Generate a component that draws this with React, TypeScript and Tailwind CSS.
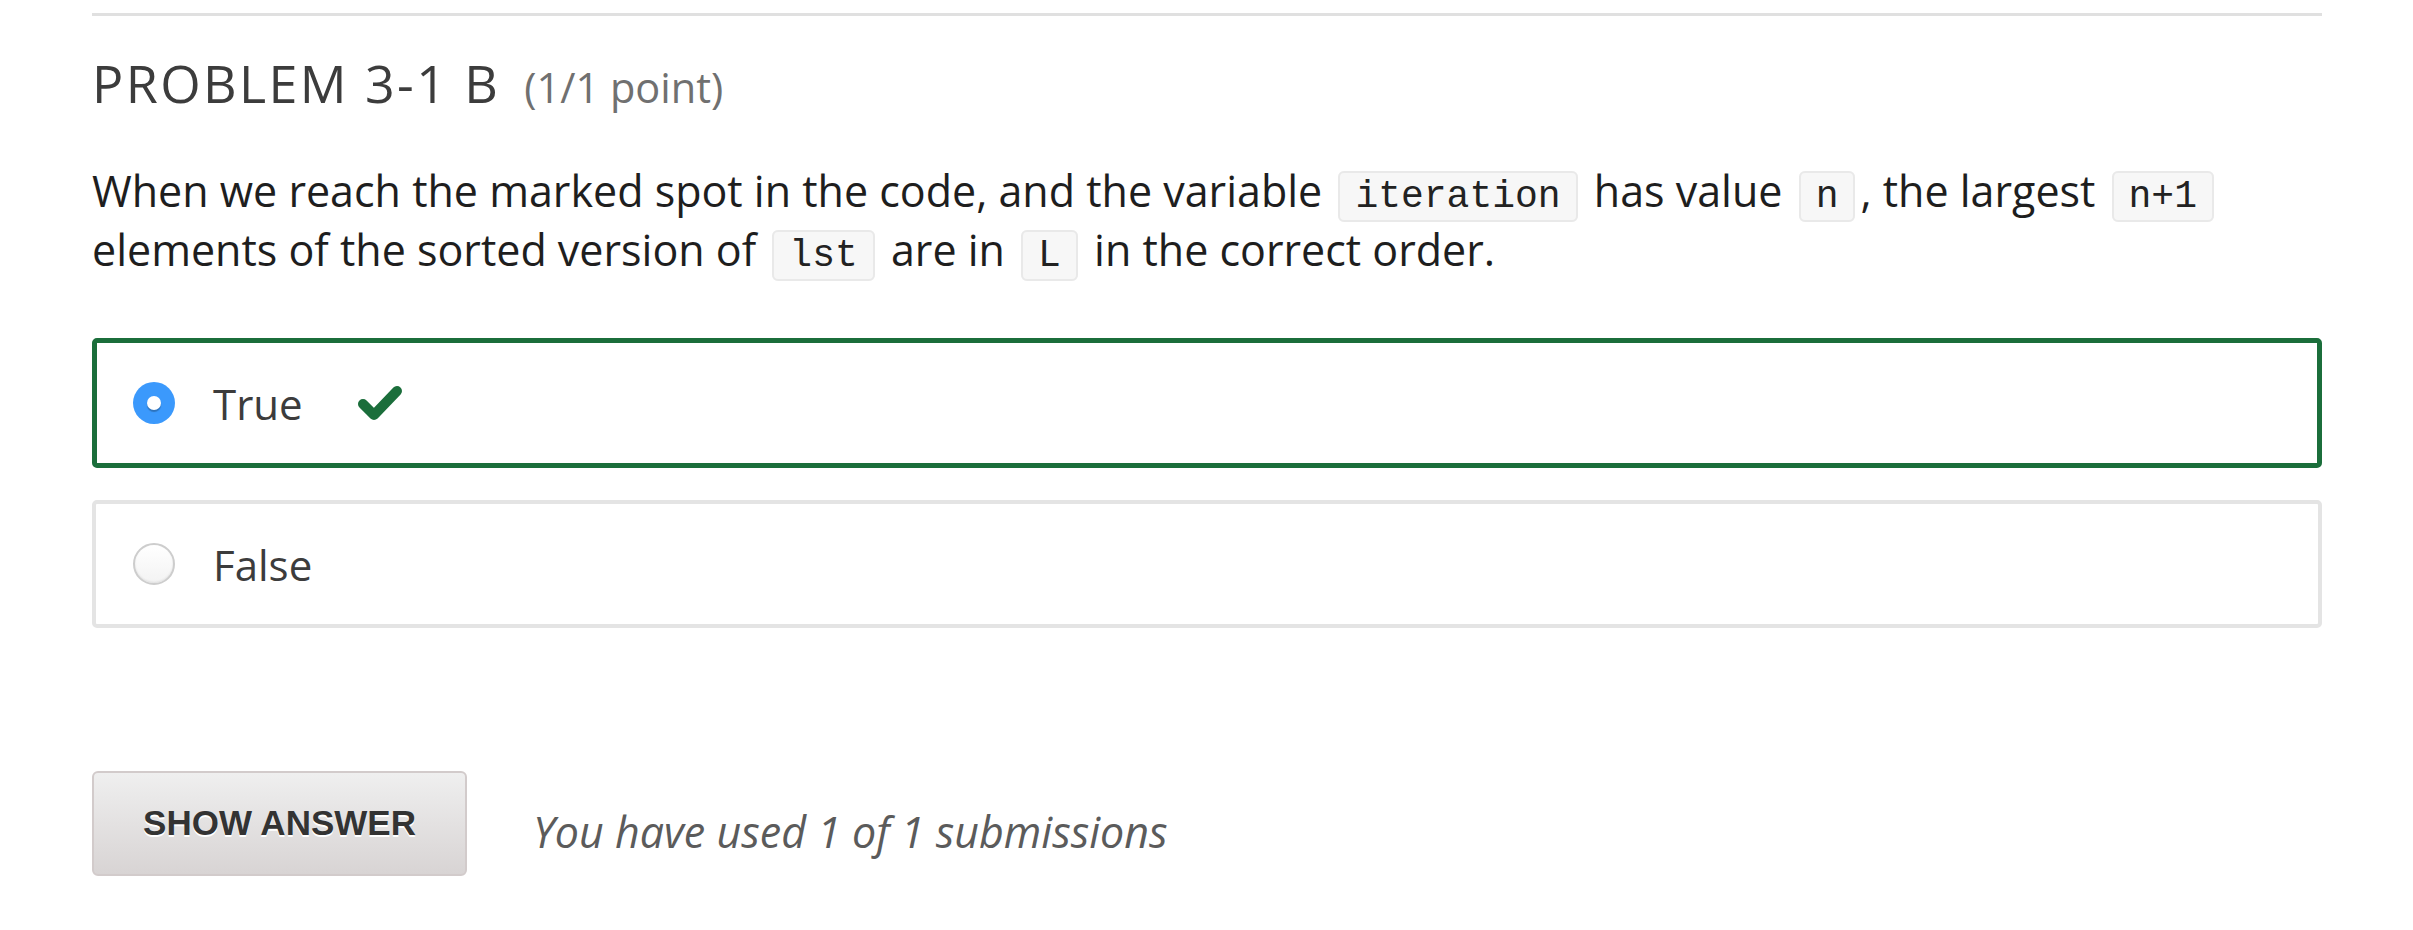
import React from 'react';

function Code({ children }: { children: React.ReactNode }) {
  return (
    <code className="mx-[5px] rounded-[6px] border-2 border-[#e9e9e9] bg-[#f7f7f7] px-[15px] py-[2px] font-['Liberation_Mono',monospace] text-[38px] leading-none text-[#222]">
      {children}
    </code>
  );
}

function Radio({ checked }: { checked?: boolean }) {
  if (checked) {
    return (
      <span className="flex h-[42px] w-[42px] shrink-0 items-center justify-center rounded-full bg-[#3b99fc]">
        <span className="h-[14px] w-[14px] rounded-full bg-white shadow-[0_2px_1px_rgba(0,0,0,0.25)]" />
      </span>
    );
  }
  return (
    <span className="h-[42px] w-[42px] shrink-0 rounded-full border-2 border-[#cdcdcd] bg-gradient-to-b from-white to-[#f3f3f3] shadow-[inset_0_-1px_2px_rgba(0,0,0,0.08)]" />
  );
}

function CheckIcon() {
  return (
    <svg width="46" height="36" viewBox="0 0 46 36" className="ml-[54px]">
      <polyline
        points="6,19 17,30 40,6"
        fill="none"
        stroke="#1b6e3b"
        strokeWidth="10"
        strokeLinecap="round"
        strokeLinejoin="round"
      />
    </svg>
  );
}

export default function App() {
  return (
    <div className="min-h-screen bg-white pl-[92px] pr-[91px] pt-[13px] font-['Open_Sans',sans-serif]">
      {/* Top rule */}
      <div className="border-t-[3px] border-[#e0e0e0]" />

      {/* Problem header */}
      <h2 className="mt-[37px] text-[52px] font-normal leading-[60px] tracking-[2.4px] text-[#3c3c3c]">
        PROBLEM 3-1 B
        <span className="ml-[24px] text-[41.5px] tracking-normal text-[#707070]">(1/1 point)</span>
      </h2>

      {/* Question */}
      <p className="mt-[44px] text-[43px] leading-[59px] text-[#1e1e1e]">
        When we reach the marked spot in the code, and the variable <Code>iteration</Code> has value <Code>n</Code>, the
        largest <Code>n+1</Code>
        <br />
        elements of the sorted version of <Code>lst</Code> are in <Code>L</Code> in the correct order.
      </p>

      {/* Choices */}
      <div className="mt-[59px] flex flex-col gap-[32px]">
        <label className="flex h-[130px] items-center rounded-[5px] border-[5px] border-[#1b6e3b] pl-[36px]">
          <Radio checked />
          <span className="ml-[38px] text-[42px] text-[#3c3c3c]">True</span>
          <CheckIcon />
        </label>
        <label className="flex h-[128px] items-center rounded-[5px] border-4 border-[#e4e4e4] pl-[37px]">
          <Radio />
          <span className="ml-[38px] text-[42px] text-[#3c3c3c]">False</span>
        </label>
      </div>

      {/* Actions */}
      <div className="mt-[143px] flex items-center">
        <button className="h-[105px] w-[375px] rounded-[6px] border-2 border-[#d2cbcb] bg-gradient-to-b from-[#efefef] to-[#d8d4d4] font-['Liberation_Sans',Arial,sans-serif] text-[35px] font-bold text-[#333] [text-shadow:0_2px_0_#ffffff]">
          SHOW ANSWER
        </button>
        <span className="ml-[66px] pt-[18px] text-[43px] italic text-[#5b5b5b]">
          You have used 1 of 1 submissions
        </span>
      </div>
    </div>
  );
}
